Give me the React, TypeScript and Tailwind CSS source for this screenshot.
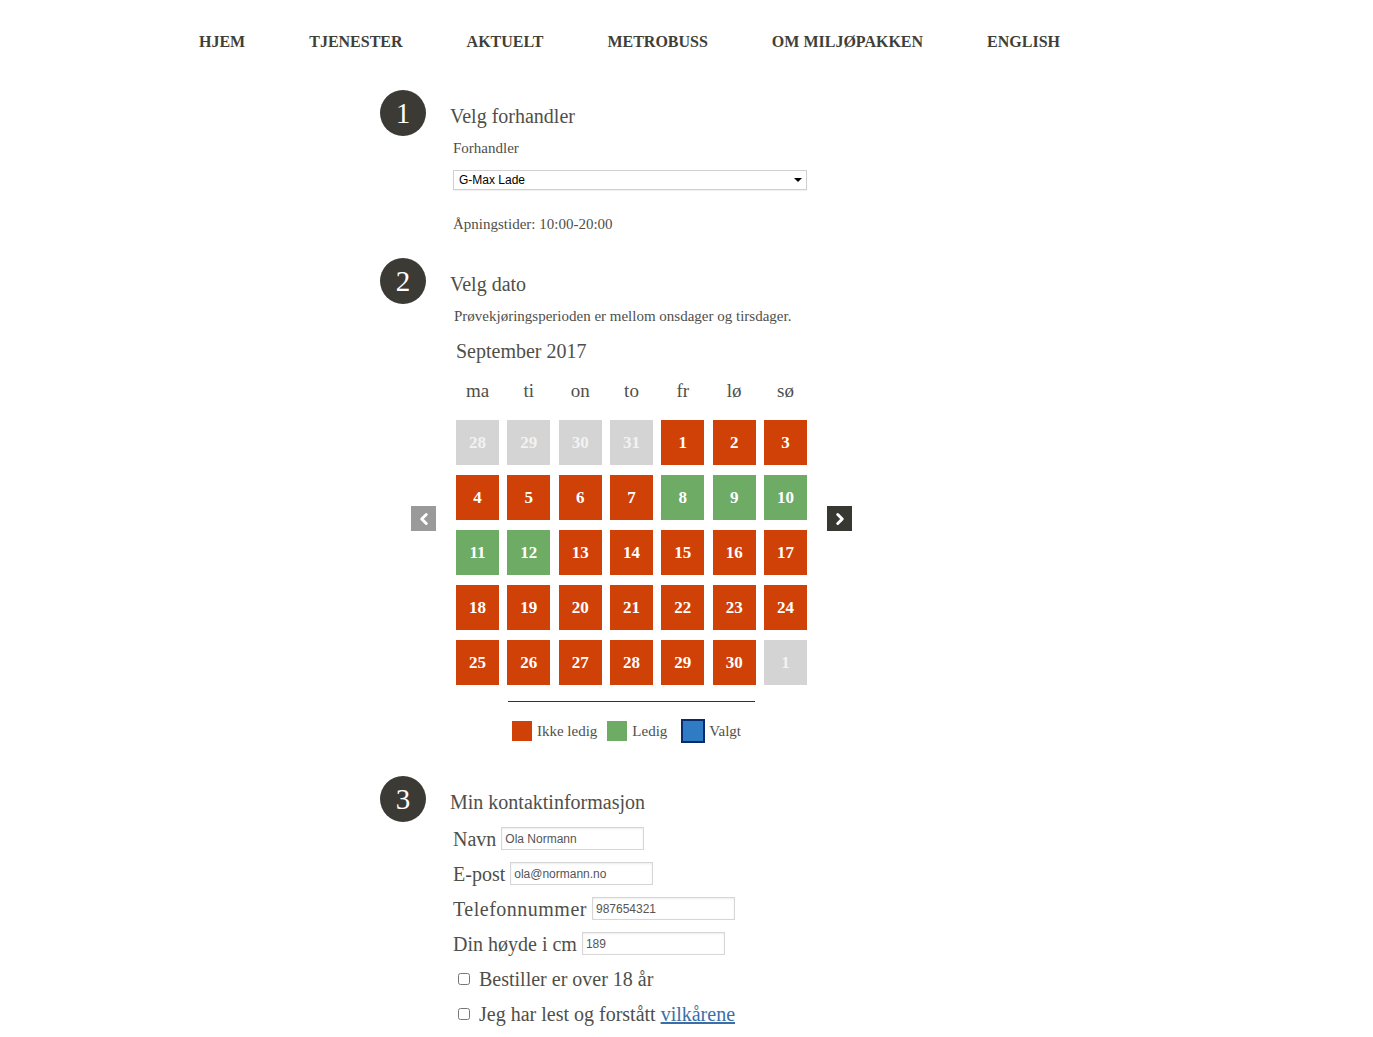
import { ChevronLeft, ChevronRight } from "lucide-react";

const navItems = ["HJEM", "TJENESTER", "AKTUELT", "METROBUSS", "OM MILJØPAKKEN", "ENGLISH"];
const weekdays = ["ma", "ti", "on", "to", "fr", "lø", "sø"];

type Day = { n: number; s: "off" | "busy" | "free" };

const days: Day[] = [
  { n: 28, s: "off" }, { n: 29, s: "off" }, { n: 30, s: "off" }, { n: 31, s: "off" },
  { n: 1, s: "busy" }, { n: 2, s: "busy" }, { n: 3, s: "busy" },
  { n: 4, s: "busy" }, { n: 5, s: "busy" }, { n: 6, s: "busy" }, { n: 7, s: "busy" },
  { n: 8, s: "free" }, { n: 9, s: "free" }, { n: 10, s: "free" },
  { n: 11, s: "free" }, { n: 12, s: "free" }, { n: 13, s: "busy" }, { n: 14, s: "busy" },
  { n: 15, s: "busy" }, { n: 16, s: "busy" }, { n: 17, s: "busy" },
  { n: 18, s: "busy" }, { n: 19, s: "busy" }, { n: 20, s: "busy" }, { n: 21, s: "busy" },
  { n: 22, s: "busy" }, { n: 23, s: "busy" }, { n: 24, s: "busy" },
  { n: 25, s: "busy" }, { n: 26, s: "busy" }, { n: 27, s: "busy" }, { n: 28, s: "busy" },
  { n: 29, s: "busy" }, { n: 30, s: "busy" }, { n: 1, s: "off" },
];

const cellColor = {
  off: "bg-[#d4d4d4] text-[#f2f2f2]",
  busy: "bg-[#d04108] text-white",
  free: "bg-[#6eab64] text-white",
};

function StepCircle({ n }: { n: number }) {
  return (
    <div className="w-[46px] h-[46px] shrink-0 rounded-full bg-[#3b3a35] text-white flex items-center justify-center text-[29px] leading-none">
      {n}
    </div>
  );
}

function TextInput({ value }: { value: string }) {
  return (
    <input
      type="text"
      defaultValue={value}
      className="w-[143px] h-[23px] ml-[5px] px-[3px] border border-[#d6d6d6] shadow-[inset_0_1px_2px_rgba(0,0,0,0.08)] text-[12px] text-[#555] outline-none font-['Liberation_Sans',sans-serif]"
    />
  );
}

export default function App() {
  return (
    <div className="min-h-screen bg-white text-[#4f4f4a] font-['Liberation_Serif',serif]">
      {/* Top navigation */}
      <nav className="flex gap-[64px] pl-[199px] pt-[33px] text-[16px] font-bold text-[#3f3f38] leading-[18px]">
        {navItems.map((item) => (
          <span key={item}>{item}</span>
        ))}
      </nav>

      <div className="pl-[380px] pt-[39px] pb-10">
        {/* Step 1 */}
        <section className="flex">
          <StepCircle n={1} />
          <div className="ml-[24px] pt-[14px]">
            <h2 className="text-[20px] leading-[24px]">Velg forhandler</h2>
            <div className="pl-[3px]">
              <p className="text-[15px] leading-[20px] mt-[10px]">Forhandler</p>
              <div className="mt-[12px] w-[354px] h-[20px] border border-[#d0d0d0] shadow-[0_1px_1px_rgba(0,0,0,0.05)] flex items-center justify-between pl-[5px] pr-[4px] text-[12px] text-black font-['Liberation_Sans',sans-serif]">
                <span>G-Max Lade</span>
                <span className="w-0 h-0 border-l-[4px] border-r-[4px] border-t-[4px] border-l-transparent border-r-transparent border-t-black" />
              </div>
              <p className="text-[15px] leading-[20px] mt-[24px]">Åpningstider: 10:00-20:00</p>
            </div>
          </div>
        </section>

        {/* Step 2 */}
        <section className="flex mt-[24px]">
          <StepCircle n={2} />
          <div className="ml-[24px] pt-[14px]">
            <h2 className="text-[20px] leading-[24px]">Velg dato</h2>
            <p className="pl-[4px] text-[15px] leading-[20px] mt-[10px]">
              Prøvekjøringsperioden er mellom onsdager og tirsdager.
            </p>

            <div className="flex items-start ml-[-39px] mt-[13px]">
              <button className="mt-[167px] w-[25px] h-[25px] bg-[#9a9a9a] text-white flex items-center justify-center">
                <ChevronLeft size={18} strokeWidth={4} />
              </button>

              <div className="ml-[20px] w-[351px]">
                <p className="text-[20px] leading-[24px]">September 2017</p>
                <div className="grid grid-cols-7 gap-x-[8.3px] mt-[16px] text-[19px] leading-[24px]">
                  {weekdays.map((d) => (
                    <span key={d} className="text-center">{d}</span>
                  ))}
                </div>
                <div className="grid grid-cols-7 gap-x-[8.3px] gap-y-[10px] mt-[17px]">
                  {days.map((d, i) => (
                    <div
                      key={i}
                      className={`h-[45px] flex items-center justify-center text-[17px] font-bold ${cellColor[d.s]}`}
                    >
                      {d.n}
                    </div>
                  ))}
                </div>
                <div className="mx-auto w-[247px] h-px bg-[#333] mt-[16px]" />
                <div className="flex justify-center items-center mt-[17px] pr-[10px] text-[15px] leading-[20px]">
                  <span className="w-[20px] h-[20px] bg-[#d04108]" />
                  <span className="ml-[5px]">Ikke ledig</span>
                  <span className="ml-[10px] w-[20px] h-[20px] bg-[#6eab64]" />
                  <span className="ml-[5px]">Ledig</span>
                  <span className="ml-[14px] w-[24px] h-[24px] bg-[#2f7bc4] border-2 border-[#0b2a6e]" />
                  <span className="ml-[4px]">Valgt</span>
                </div>
              </div>

              <button className="ml-[20px] mt-[167px] w-[25px] h-[25px] bg-[#383833] text-white flex items-center justify-center">
                <ChevronRight size={18} strokeWidth={4} />
              </button>
            </div>
          </div>
        </section>

        {/* Step 3 */}
        <section className="flex mt-[33px]">
          <StepCircle n={3} />
          <div className="ml-[24px] pt-[14px]">
            <h2 className="text-[20px] leading-[24px]">Min kontaktinformasjon</h2>
            <div className="pl-[3px] text-[20px] leading-[24px]">
              <div className="flex items-center h-[35px] mt-[7px]">
                <span>Navn</span>
                <TextInput value="Ola Normann" />
              </div>
              <div className="flex items-center h-[35px]">
                <span>E-post</span>
                <TextInput value="ola@normann.no" />
              </div>
              <div className="flex items-center h-[35px]">
                <span className="tracking-[0.5px]">Telefonnummer</span>
                <TextInput value="987654321" />
              </div>
              <div className="flex items-center h-[35px]">
                <span>Din høyde i cm</span>
                <TextInput value="189" />
              </div>
              <label className="flex items-center h-[35px] pl-[5px]">
                <input type="checkbox" className="w-[12px] h-[12px] mr-[9px]" />
                <span>Bestiller er over 18 år</span>
              </label>
              <label className="flex items-center h-[35px] pl-[5px]">
                <input type="checkbox" className="w-[12px] h-[12px] mr-[9px]" />
                <span>
                  Jeg har lest og forstått{" "}
                  <a href="#" className="text-[#3b6ea8] underline">vilkårene</a>
                </span>
              </label>
            </div>
          </div>
        </section>
      </div>
    </div>
  );
}
